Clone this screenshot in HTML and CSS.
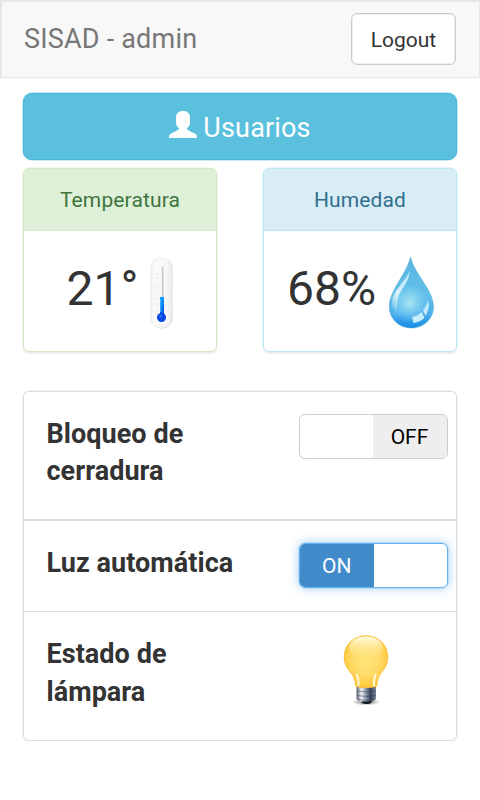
FILE: index.html
```html
<!DOCTYPE html>
<html lang="es">
<head>
<meta charset="utf-8">
<title>SISAD - admin</title>
<link rel="stylesheet" href="styles.css">
</head>
<body>
<header class="navbar">
  <span class="brand">SISAD - admin</span>
  <button class="logout">Logout</button>
</header>
<main class="content">
  <button class="users">
    <svg class="user-icon" width="28" height="27" viewBox="0 0 28 27"><path fill="#fff" d="M14 0C9.500 0 7 2.500 7 6.500V11c0 3 1 4.500 3 6.200V18.300C7 20.500 3.500 21.500 1 23.300Q0 24 0 25.500V27H28V25.500Q28 24 27 23.300C24 21.500 21 20.500 18 18.300V17.200C20 15.500 21 14 21 11V6.500C21 2.500 18.500 0 14 0Z"/></svg>
    <span class="users-label">Usuarios</span>
  </button>
  <div class="panels">
    <section class="panel panel-temp">
      <h3 class="panel-title"><span class="temp-title">Temperatura</span></h3>
      <div class="panel-body">
        <span class="value">21°</span>
        <svg class="thermometer" width="24" height="72" viewBox="0 0 24 72">
          <defs>
            <linearGradient id="case" x2="1"><stop offset="0" stop-color="#f1f1f1"/><stop offset=".2" stop-color="#fafafa"/><stop offset=".75" stop-color="#f7f7f7"/><stop offset="1" stop-color="#e8e8e8"/></linearGradient>
            <linearGradient id="fluid" x2="0" y2="1"><stop stop-color="#079dff"/><stop offset="1" stop-color="#004ee8"/></linearGradient>
            <radialGradient id="bulb" cx=".45" cy=".35" r=".6"><stop stop-color="#2f7dff"/><stop offset=".5" stop-color="#0640dd"/><stop offset="1" stop-color="#064be8"/></radialGradient>
          </defs>
          <rect x="1" y="1" width="22" height="70.500" rx="11" fill="#d4d4d4"/>
          <rect x=".5" y=".5" width="22" height="70.500" rx="11" fill="url(#case)" stroke="#ebebeb" stroke-width=".7"/>
          <path d="M5 17h4M6 21h3M5 29h4M5 36h4M5 42h4M5 48h4M5 54h4M15 17h4M15 23h4M15 29h4M15 36h4M15 42h4M15 48h4M15 54h4" stroke="#ebebeb" fill="none"/>
          <path d="M12.500 10V43" stroke="#c8c8c8" stroke-width="2"/>
          <path d="M11 10V40" stroke="#fff"/>
          <rect x="10" y="40" width="4" height="19" fill="url(#fluid)"/>
          <circle cx="11.500" cy="60.500" r="4.500" fill="url(#bulb)"/>
          <path d="M10.800 42v13" stroke="#51c1ff"/>
        </svg>
      </div>
    </section>
    <section class="panel panel-hum">
      <h3 class="panel-title"><span class="hum-title">Humedad</span></h3>
      <div class="panel-body">
        <span class="value">68%</span>
        <svg class="drop" width="45" height="72" viewBox="0 0 45 72">
          <defs>
            <linearGradient id="water" x2="0" y2="1"><stop stop-color="#57b5df"/><stop offset=".55" stop-color="#62bfe9"/><stop offset=".8" stop-color="#4db0ed"/><stop offset="1" stop-color="#168be7"/></linearGradient>
            <radialGradient id="glow"><stop stop-color="#a8e8f5"/><stop offset="1" stop-color="#8ed7f0" stop-opacity="0"/></radialGradient>
            <linearGradient id="shine" x1=".8" x2=".2" y2="1"><stop stop-color="#b9e6f7"/><stop offset=".6" stop-color="#d6f2fb"/><stop offset="1" stop-color="#fff" stop-opacity=".1"/></linearGradient>
          </defs>
          <path d="M21.500 0C25 17 44.500 33 44.500 49.500C44.500 62 34.500 71 22.300 71S.3 62 .3 49.500C.3 33 18 17 21.500 0Z" fill="url(#water)" stroke="#4eacd9" stroke-width=".6"/>
          <circle cx="20.500" cy="46" r="19" fill="url(#glow)"/>
          <path d="M20.800 14C20 27 10 32 8.500 44Q7.500 51 8 55C3 52 2 46 4 40C7 31 17 23 20.800 14Z" fill="url(#shine)"/>
          <path d="M23 60Q29 59 32.500 55L35.500 61Q31 65 24.500 66Z" fill="#c8edfb"/>
          <path d="M34 53Q38 49 38.500 43Q42 49 36.500 59Z" fill="#c3eafa"/>
        </svg>
      </div>
    </section>
  </div>
  <ul class="list">
    <li class="row row-lock">
      <span class="row-label">Bloqueo de<br>cerradura</span>
      <span class="switch"><span class="half"></span><span class="half off">OFF</span></span>
    </li>
    <li class="row row-light">
      <span class="row-label">Luz automática</span>
      <span class="switch switch-on"><span class="half on">ON</span><span class="half"></span></span>
    </li>
    <li class="row row-lamp">
      <span class="row-label">Estado de<br>lámpara</span>
      <svg class="lamp" width="46" height="72" viewBox="0 0 46 72">
        <defs>
          <radialGradient id="glass" cx=".5" cy=".46" r=".58"><stop stop-color="#ffe57a"/><stop offset=".5" stop-color="#ffdc6a"/><stop offset=".85" stop-color="#ffcb42"/><stop offset="1" stop-color="#fcb929"/></radialGradient>
          <linearGradient id="top" x2="0" y2="1"><stop stop-color="#fffbe5"/><stop offset="1" stop-color="#ffe78b" stop-opacity="0"/></linearGradient>
          <linearGradient id="metal" x2="1"><stop stop-color="#56606f"/><stop offset=".25" stop-color="#f2f5f8"/><stop offset=".48" stop-color="#8d98a8"/><stop offset=".72" stop-color="#354258"/><stop offset="1" stop-color="#7c8898"/></linearGradient>
          <radialGradient id="shade"><stop stop-color="#000" stop-opacity=".6"/><stop offset="1" stop-color="#000" stop-opacity="0"/></radialGradient>
        </defs>
        <ellipse cx="23" cy="67" rx="14" ry="3.500" fill="url(#shade)"/>
        <path d="M13.500 51H33V64Q31 66 28 67Q27 69 23.500 69T18 67Q15 66 13.500 64Z" fill="url(#metal)"/>
        <path d="M14 56Q23 58 33 56M14 60.500Q23 62.500 33 60.500M15 64.500Q23 66.500 32 64.500" fill="none" stroke="#344055" stroke-opacity=".5"/>
        <path d="M18 66.500H29Q28 69 23.500 69T18 66.500Z" fill="#10151d"/>
        <path d="M23 .8C10.500 .8 1.200 10 1.200 22C1.200 36 12.500 37 12.500 50.500Q13 52.500 23 52.500T34 50.500C34 37 44.800 36 44.800 22C44.800 10 35.500 .8 23 .8Z" fill="url(#glass)" stroke="#f8bd3a" stroke-width=".9"/>
        <ellipse cx="23" cy="13" rx="17" ry="11.500" fill="url(#top)"/>
        <path d="M13.500 39Q16 44 15.500 51M33 39Q30.500 44 31 51" fill="none" stroke="#fff5ce" stroke-width="2.200"/>
      </svg>
    </li>
  </ul>
</main>
</body>
</html>
```

FILE: styles.css
```css
* { box-sizing: border-box; }
body { margin: 0; background: #fff; color: #333; font-family: Roboto, sans-serif; font-size: 21px; }
button { font: inherit; }
.navbar { display: flex; justify-content: space-between; align-items: flex-start; height: 78px; padding: 11px 23px 0 22px; background: #f8f8f8; border: solid #e7e7e7; border-width: 2px 1px 1px 2px; }
.brand { margin-top: 8px; color: #777; font-size: 27px; line-height: 37px; letter-spacing: .2px; }
.logout { width: 105px; height: 52px; padding: 1px 0 0; background: #fff; border: 1px solid #ccc; box-shadow: inset 0 0 0 .5px #ddd; border-radius: 6px; color: #333; line-height: 50px; }
.content { padding: 15px 23px 0; }
.users { display: flex; justify-content: center; gap: 6px; width: 100%; height: 67px; padding: 0; background: #5bc0de; border: 1px solid #46b8da; border-radius: 9px; box-shadow: 0 0 0 .5px #8fd4e9; color: #fff; font-size: 27px; letter-spacing: .15px; line-height: 68px; }
.user-icon { margin-top: 17px; }
.panels { display: flex; justify-content: space-between; margin-top: 8px; }
.panel { width: 194px; height: 184px; border: 1px solid; border-radius: 6px; overflow: hidden; }
.panel-title { height: 62px; margin: 0; border-bottom: 1px solid; font-size: 21px; font-weight: 400; letter-spacing: .13px; line-height: 63px; text-align: center; }
.panel-temp, .panel-temp .panel-title { border-color: #d6e9c6; }
.panel-temp { box-shadow: 0 0 0 .5px #e4f0da, 0 1.500px 1.500px rgba(0, 0, 0, .07); }
.panel-temp .panel-title { background: #dff0d8; }
.temp-title { color: #3c763d; }
.panel-hum, .panel-hum .panel-title { border-color: #bce8f1; }
.panel-hum { box-shadow: 0 0 0 .5px #d4f0f6, 0 1.500px 1.500px rgba(0, 0, 0, .07); }
.panel-hum .panel-title { background: #d9edf7; }
.hum-title { color: #31708f; }
.panel-body { display: flex; justify-content: center; padding: 26px 0 0 1px; }
.value { font-size: 48px; line-height: 64px; }
.thermometer { margin-left: 12px; }
.drop { margin-left: 13px; }
.list { margin: 39px 0 0; padding: 0; list-style: none; border: 1px solid #ddd; border-radius: 6px; box-shadow: 0 0 0 .5px #e8e8e8; }
.row { display: flex; justify-content: space-between; align-items: flex-start; padding: 22px 8px 0 22.500px; }
.row-lock { height: 129px; border-bottom: 2px solid #ddd; }
.row-light { height: 91px; border-bottom: 1px solid #ddd; }
.row-lamp { height: 128px; padding-right: 67px; }
.row-label { padding-top: 2px; font-size: 27px; font-weight: 700; letter-spacing: .05px; line-height: 37.500px; }
.row-lock .row-label { line-height: 37px; }
.switch { display: flex; width: 149px; height: 45px; border: 1px solid #ccc; border-radius: 6px; overflow: hidden; line-height: 44px; text-align: center; }
.half { flex: 1; }
.off { padding-right: 1px; background: #eee; color: #000; }
.on { background: #428bca; color: #fff; }
.switch-on { border-color: #66afe9; box-shadow: 0 0 0 .5px #9bcbf1, 0 0 11px rgba(102, 175, 233, .6); }
.row-lamp .lamp { margin-top: 1px; }
```
